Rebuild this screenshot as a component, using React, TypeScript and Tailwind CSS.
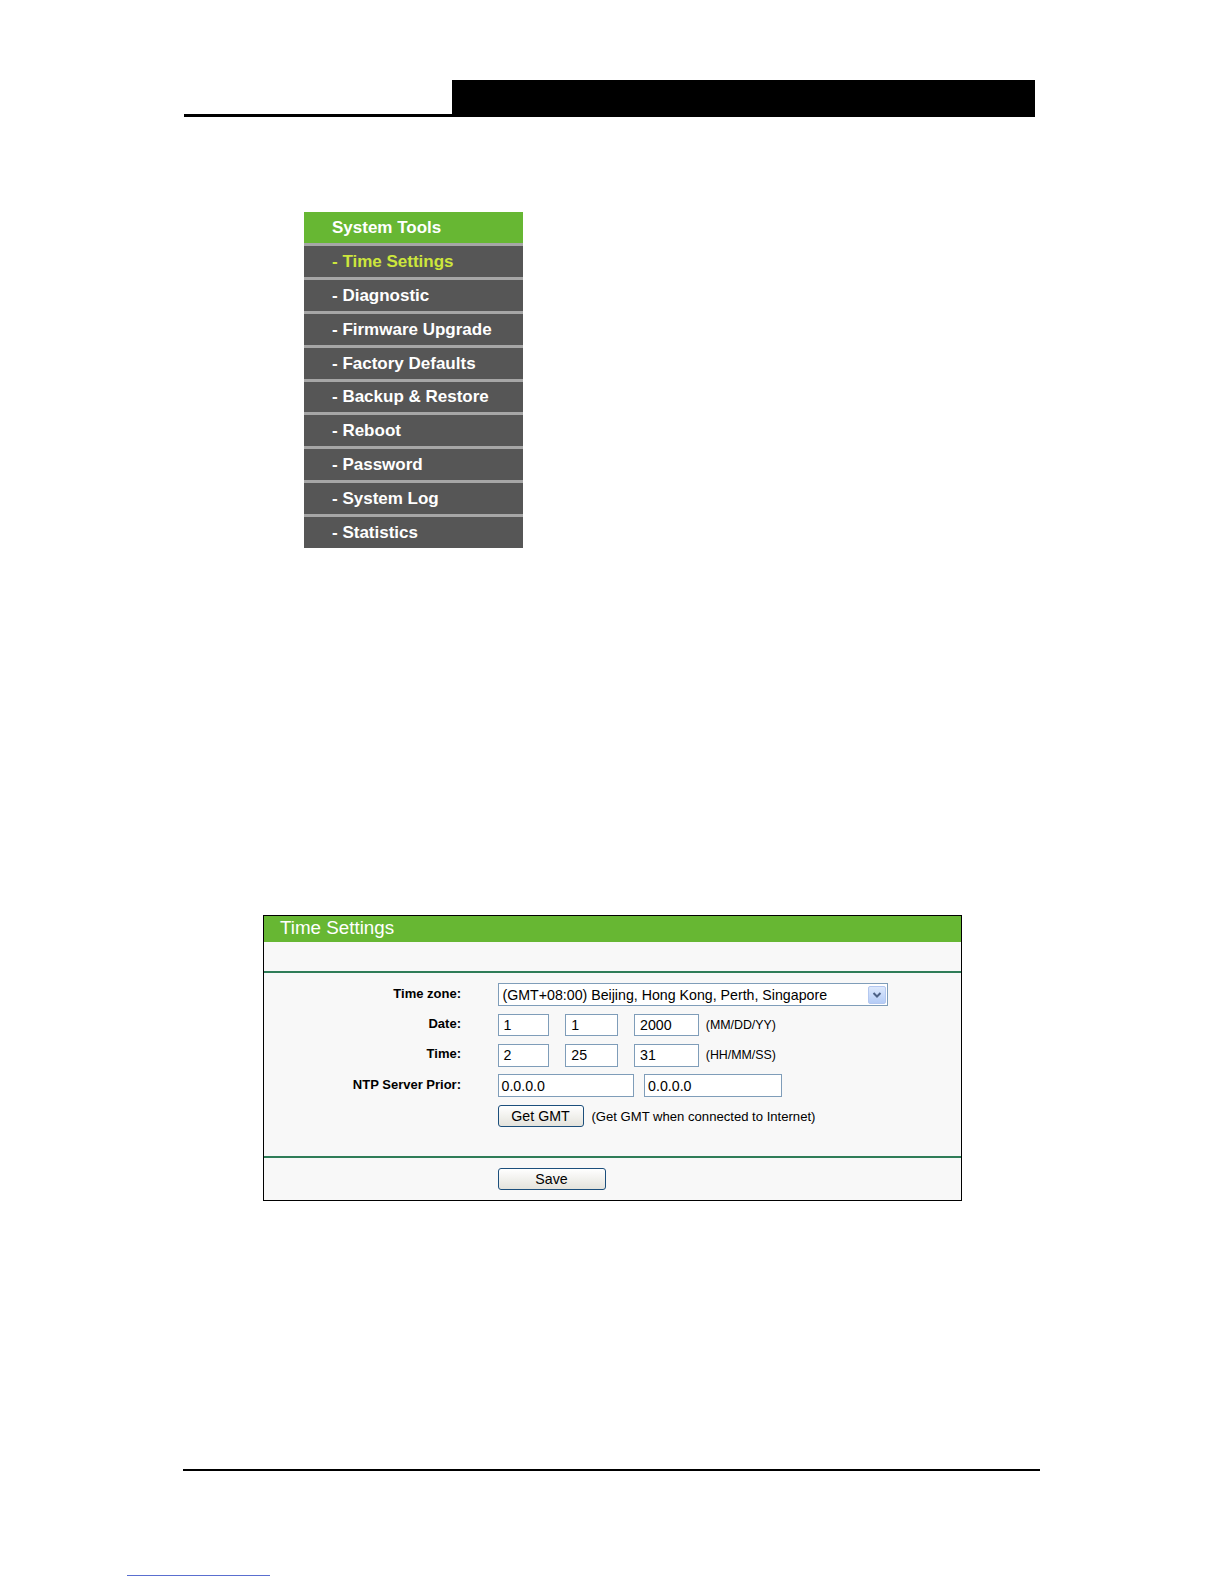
import React from "react";

const menuItems = [
  "Time Settings",
  "Diagnostic",
  "Firmware Upgrade",
  "Factory Defaults",
  "Backup & Restore",
  "Reboot",
  "Password",
  "System Log",
  "Statistics",
];

function TextBox({ value, w }: { value: string; w: string }) {
  return (
    <div
      className={`${w} h-[22.5px] border border-[#7f9db9] bg-white pl-[5px] flex items-center text-[14.2px] text-black leading-none`}
    >
      {value}
    </div>
  );
}

function Btn({ label, w }: { label: string; w: string }) {
  return (
    <div
      className={`${w} h-[22.5px] border border-[#1c4f7c] rounded-[3px] bg-linear-to-b from-white to-[#e4e3dc] flex items-center justify-center text-[14.2px] text-black leading-none`}
    >
      {label}
    </div>
  );
}

function Row({ label, children }: { label: string; children?: React.ReactNode }) {
  return (
    <div className="flex items-center h-[30.35px]">
      <div className="w-[197px] text-right text-[13px] font-bold text-black pb-[3px] leading-none">
        {label}
      </div>
      <div className="ml-[36.5px] flex items-center">{children}</div>
    </div>
  );
}

export default function App() {
  return (
    <div className="w-[1224px] h-[1584px] bg-white font-['Liberation_Sans',Arial,sans-serif] pt-[80px] relative overflow-hidden">
      {/* Header bar */}
      <div className="ml-[184px] w-[851px] flex">
        <div className="flex-1 border-b-[3px] border-black"></div>
        <div className="w-[583px] h-[37px] bg-black"></div>
      </div>

      {/* Menu */}
      <div className="ml-[303.5px] mt-[95px] w-[219px]">
        <div className="h-[31.4px] bg-[#67b733] flex items-center pl-[28.5px] text-white font-bold text-[17px] leading-none">
          System Tools
        </div>
        {menuItems.map((item, i) => (
          <div
            key={item}
            className="h-[33.8px] border-t-[3px] border-[#a6a6a6] bg-[#565656] flex items-center pl-[28.5px] font-bold text-[17px] leading-none"
          >
            <span className={i === 0 ? "text-[#cde63c]" : "text-white"}>- {item}</span>
          </div>
        ))}
      </div>

      {/* Time Settings form */}
      <div className="ml-[263px] mt-[367px] w-[699px] border border-black bg-[#f8f8f8]">
        <div className="h-[26px] bg-[#67b733] flex items-center pl-[16px] text-white text-[18.8px] leading-none">
          Time Settings
        </div>
        <div className="h-[29px]"></div>
        <div className="h-[2px] bg-[#2f7d58]"></div>
        <div className="pt-[7px] pb-[24.3px]">
          <Row label="Time zone:">
            <div className="w-[390.5px] h-[22.5px] border border-[#7f9db9] bg-white flex items-center justify-between pl-[4px] pr-[1px]">
              <span className="text-[14.2px] text-black leading-none">
                (GMT+08:00) Beijing, Hong Kong, Perth, Singapore
              </span>
              <div className="w-[18px] h-[18px] rounded-[2px] border border-[#b4c8f0] bg-linear-to-b from-[#dce8fc] to-[#b5ccf6] flex items-center justify-center">
                <svg width="10" height="8" viewBox="0 0 10 8">
                  <path d="M1.5 2 L5 5.5 L8.5 2" stroke="#4d6185" strokeWidth="2" fill="none" />
                </svg>
              </div>
            </div>
          </Row>
          <Row label="Date:">
            <TextBox value="1" w="w-[51.6px]" />
            <div className="ml-[16.2px]">
              <TextBox value="1" w="w-[52.6px]" />
            </div>
            <div className="ml-[16.2px]">
              <TextBox value="2000" w="w-[64.7px]" />
            </div>
            <span className="ml-[7px] text-[12.4px] text-black leading-none">(MM/DD/YY)</span>
          </Row>
          <Row label="Time:">
            <TextBox value="2" w="w-[51.6px]" />
            <div className="ml-[16.2px]">
              <TextBox value="25" w="w-[52.6px]" />
            </div>
            <div className="ml-[16.2px]">
              <TextBox value="31" w="w-[64.7px]" />
            </div>
            <span className="ml-[7px] text-[12.4px] text-black leading-none">(HH/MM/SS)</span>
          </Row>
          <Row label="NTP Server Prior:">
            <div className="h-[23.3px] flex">
              <div className="w-[136.6px] h-[23.3px] border border-[#7f9db9] bg-white pl-[3px] flex items-center text-[14.2px] text-black leading-none">
                0.0.0.0
              </div>
              <div className="ml-[10px] w-[137.6px] h-[23.3px] border border-[#7f9db9] bg-white pl-[3px] flex items-center text-[14.2px] text-black leading-none">
                0.0.0.0
              </div>
            </div>
          </Row>
          <Row label="">
            <Btn label="Get GMT" w="w-[86px]" />
            <span className="ml-[8px] text-[13.1px] text-black leading-none">
              (Get GMT when connected to Internet)
            </span>
          </Row>
        </div>
        <div className="h-[2px] bg-[#2f7d58]"></div>
        <div className="py-[10px] pl-[233.5px]">
          <Btn label="Save" w="w-[108px]" />
        </div>
      </div>

      {/* Footer line */}
      <div className="ml-[183px] mt-[268px] w-[857px] h-[2px] bg-black"></div>
      <div className="ml-[126.5px] mt-[104px] w-[143.5px] h-px bg-[#5a6fd0]"></div>
    </div>
  );
}
